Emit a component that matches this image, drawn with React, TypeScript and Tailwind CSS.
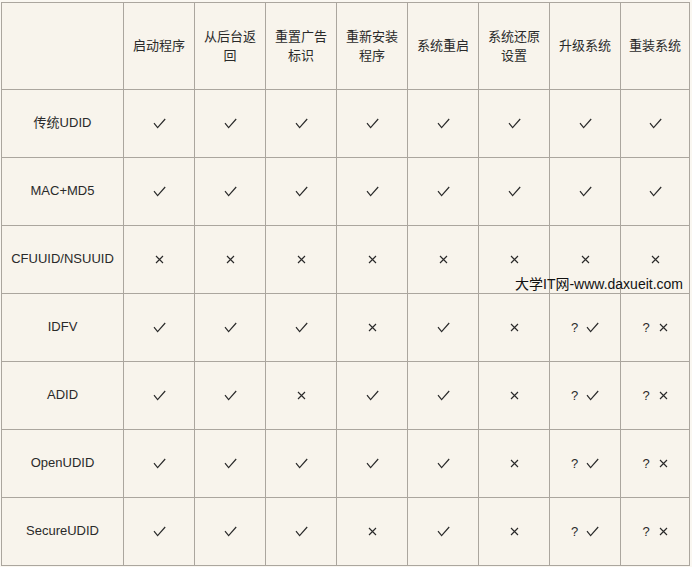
import { Fragment } from "react";

const HEADERS = ["启动程序", "从后台返回", "重置广告标识", "重新安装程序", "系统重启", "系统还原设置", "升级系统", "重装系统"];

type Mark = "y" | "n" | "qy" | "qn";

const ROWS: { label: string; marks: Mark[] }[] = [
  { label: "传统UDID", marks: ["y", "y", "y", "y", "y", "y", "y", "y"] },
  { label: "MAC+MD5", marks: ["y", "y", "y", "y", "y", "y", "y", "y"] },
  { label: "CFUUID/NSUUID", marks: ["n", "n", "n", "n", "n", "n", "n", "n"] },
  { label: "IDFV", marks: ["y", "y", "y", "n", "y", "n", "qy", "qn"] },
  { label: "ADID", marks: ["y", "y", "n", "y", "y", "n", "qy", "qn"] },
  { label: "OpenUDID", marks: ["y", "y", "y", "y", "y", "n", "qy", "qn"] },
  { label: "SecureUDID", marks: ["y", "y", "y", "n", "y", "n", "qy", "qn"] },
];

function Check() {
  return (
    <svg width="13" height="11" viewBox="0 0 13 11" className="block">
      <path d="M1 5.2 L4.6 9.6 L12.2 1" fill="none" stroke="#2a2a2a" strokeWidth="1.2" />
    </svg>
  );
}

function Cross() {
  return (
    <svg width="9" height="9" viewBox="0 0 9 9" className="block">
      <path d="M1 1 L8 8 M8 1 L1 8" fill="none" stroke="#2a2a2a" strokeWidth="1.15" />
    </svg>
  );
}

function Cell({ mark }: { mark: Mark }) {
  return (
    <div className="flex items-center justify-center bg-[#f8f4ec] pb-[1px] text-[13px]">
      {mark === "y" && <Check />}
      {mark === "n" && <Cross />}
      {mark === "qy" && (
        <div className="flex items-center gap-[8px]">
          <span className="leading-none">?</span>
          <Check />
        </div>
      )}
      {mark === "qn" && (
        <div className="flex items-center gap-[9px]">
          <span className="leading-none">?</span>
          <Cross />
        </div>
      )}
    </div>
  );
}

export default function App() {
  return (
    <div
      className="relative h-[567px] w-[692px] bg-[#faf7f1] pl-[1px] pt-[2px] text-[#2a2a2a]"
      style={{ fontFamily: '"Liberation Sans", "Noto Sans CJK SC", sans-serif' }}
    >
      <div className="grid w-fit grid-cols-[121px_repeat(7,70px)_68px] grid-rows-[86px_repeat(7,67px)] gap-px border border-[#aba69e] bg-[#aba69e]">
        <div className="bg-[#f8f4ec]" />
        {HEADERS.map((h) => (
          <div
            key={h}
            className="flex items-center justify-center bg-[#f8f4ec] px-[8px] pb-[1px] text-center text-[13px] leading-[19px]"
          >
            {h}
          </div>
        ))}
        {ROWS.map((r) => (
          <Fragment key={r.label}>
            <div className="flex items-center justify-center bg-[#f8f4ec] pb-[1px] text-[13px]">
              {r.label}
            </div>
            {r.marks.map((m, i) => (
              <Cell key={i} mark={m} />
            ))}
          </Fragment>
        ))}
      </div>
      <div className="absolute left-[515px] top-[275px] whitespace-nowrap text-[14px] leading-[18px] text-[#111]">
        大学IT网-www.daxueit.com
      </div>
    </div>
  );
}
